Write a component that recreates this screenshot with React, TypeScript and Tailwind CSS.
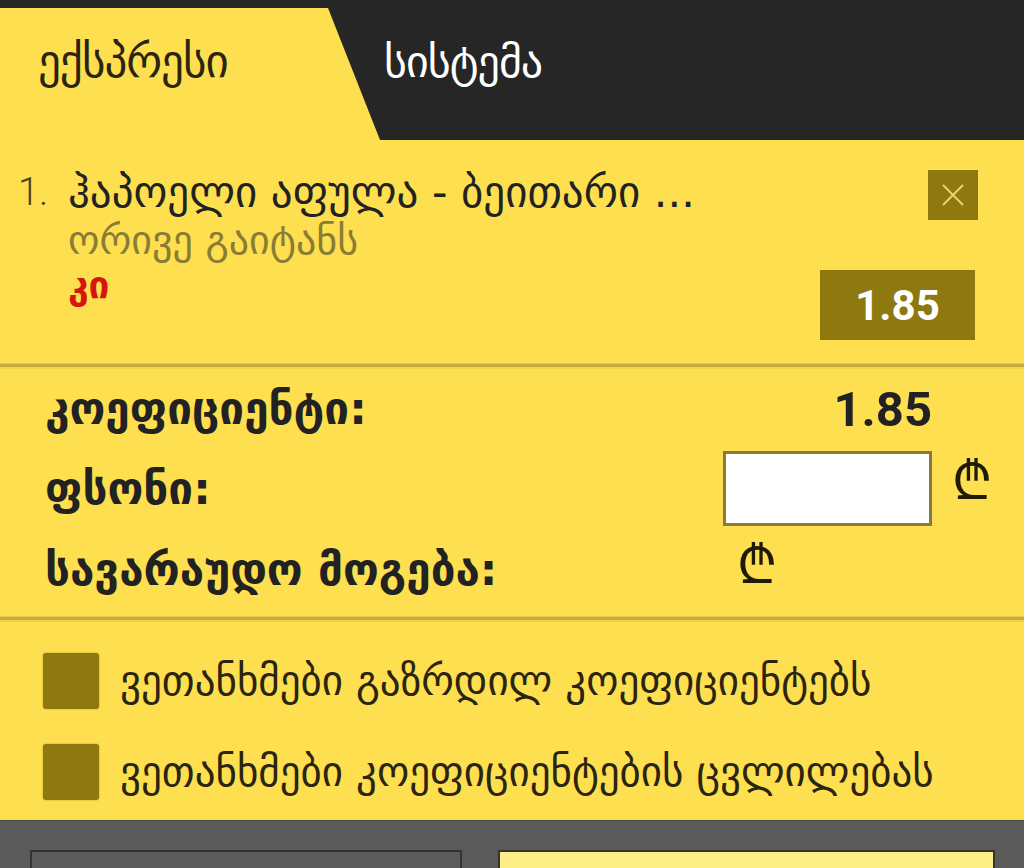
import { useState } from 'react';

const geo = "font-['DejaVu_Sans','Noto_Sans',sans-serif]";
const num = "font-['Roboto','Liberation_Sans',sans-serif]";

const Divider = () => (
  <div className="h-[6px] border-t border-[#e6c947] border-b-2 border-b-[#efd34b] bg-[#c7ac3d]" />
);

const Lari = ({ className = '' }: { className?: string }) => (
  <span className={`${geo} text-[52px] leading-none text-[#1f1a05] ${className}`}>₾</span>
);

const App = () => {
  const [stake, setStake] = useState('');
  const [agreeRaise, setAgreeRaise] = useState(false);
  const [agreeChange, setAgreeChange] = useState(false);

  return (
    <div className={`w-[1024px] h-[868px] overflow-hidden bg-[#fddf4f] ${geo} text-[#222]`}>
      {/* tabs */}
      <div className="bg-[#262626] pt-[8px]">
        <div className="flex h-[132px] items-center">
          <div className="w-[380px] h-full bg-[#fddf4f] [clip-path:polygon(0_0,328px_0,100%_100%,0_100%)] flex items-center pl-[38px]">
            <span className="text-[45px] text-[#2a2410] pb-[24px] tracking-[-1px]">ექსპრესი</span>
          </div>
          <div className="flex items-center pl-[4px] h-full">
            <span className="text-[44px] text-white pb-[24px] tracking-[-1px]">სისტემა</span>
          </div>
        </div>
      </div>

      {/* selected event */}
      <div className="flex justify-between h-[223px] pl-[18px] pr-[46px] pt-[28px]">
        <div className="flex">
          <span className={`${num} text-[38px] font-light text-[#4a4220] w-[50px] leading-[48px]`}>1.</span>
          <div className="flex flex-col">
            <span className="text-[43px] leading-[48px] text-[#222]">ჰაპოელი აფულა - ბეითარი ...</span>
            <span className="text-[40px] leading-[48px] text-[#8a7b35]">ორივე გაიტანს</span>
            <span className="text-[37px] leading-[44px] font-bold text-[#d1170e]">კი</span>
          </div>
        </div>
        <div className="flex flex-col items-end">
          <button className="w-[50px] h-[50px] bg-[#8e7910] flex items-center justify-center mt-[2px]">
            <svg width="24" height="24" viewBox="0 0 24 24" stroke="#e8d46a" strokeWidth="2">
              <line x1="2" y1="2" x2="22" y2="22" />
              <line x1="22" y1="2" x2="2" y2="22" />
            </svg>
          </button>
          <div className={`mt-[50px] mr-[3px] w-[155px] h-[70px] bg-[#8e7910] flex items-center justify-center ${num} font-bold text-[42px] text-white`}>
            1.85
          </div>
        </div>
      </div>

      <Divider />

      {/* totals */}
      <div className="h-[247px] pl-[45px] pt-[16px] flex flex-col">
        <div className="flex items-center h-[48px]">
          <span className="text-[44px] font-bold flex-1 leading-none">კოეფიციენტი:</span>
          <span className={`${num} font-bold text-[49px] leading-none mr-[92px]`}>1.85</span>
        </div>
        <div className="flex items-center mt-[18px] h-[75px]">
          <span className="text-[44px] font-bold flex-1 leading-none">ფსონი:</span>
          <input
            value={stake}
            onChange={(e) => setStake(e.target.value)}
            className="w-[209px] h-[75px] bg-white border-[3px] border-[#8a7a3c] outline-none px-3 text-[28px]"
          />
          <div className="w-[92px] self-start pl-[20px] pt-[4px]">
            <Lari />
          </div>
        </div>
        <div className="flex items-center mt-[20px] h-[48px]">
          <span className="text-[44px] font-bold w-[692px] leading-none">სავარაუდო მოგება:</span>
          <Lari className="-mt-[10px]" />
        </div>
      </div>

      <Divider />

      {/* confirmations */}
      <div className="h-[198px] pl-[43px] pt-[31px] flex flex-col gap-[35px]">
        <label className="flex items-center gap-[21px] cursor-pointer">
          <span
            onClick={() => setAgreeRaise(!agreeRaise)}
            className="w-[56px] h-[56px] shrink-0 rounded-[3px] bg-[#8e7910] shadow-[0_0_2px_rgba(0,0,0,0.3)]"
          />
          <span className="text-[41px] leading-none text-[#2a2410]">ვეთანხმები გაზრდილ კოეფიციენტებს</span>
        </label>
        <label className="flex items-center gap-[21px] cursor-pointer">
          <span
            onClick={() => setAgreeChange(!agreeChange)}
            className="w-[56px] h-[56px] shrink-0 rounded-[3px] bg-[#8e7910] shadow-[0_0_2px_rgba(0,0,0,0.3)]"
          />
          <span className="text-[41px] leading-none text-[#2a2410]">ვეთანხმები კოეფიციენტების ცვლილებას</span>
        </label>
      </div>

      {/* footer buttons */}
      <div className="h-[48px] bg-[#5a5a5a] border-t border-[#4a4a4a] flex gap-[36px] pl-[30px] pr-[29px] pt-[29px]">
        <div className="w-[432px] h-[40px] bg-[#5c5c5c] border-2 border-[#333]" />
        <div className="flex-1 h-[40px] bg-[#fdef86] border-2 border-[#333]" />
      </div>
    </div>
  );
};

export default App;
